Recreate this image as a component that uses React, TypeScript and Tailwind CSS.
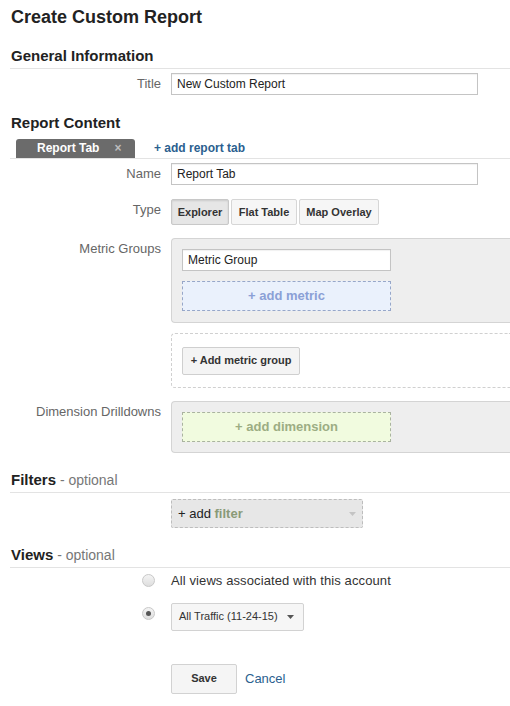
function Label({ children, className = "" }: { children: React.ReactNode; className?: string }) {
  return <div className={`text-right text-[13px] text-[#666] ${className}`}>{children}</div>;
}

function Heading({ children, className = "" }: { children: React.ReactNode; className?: string }) {
  return (
    <div className={`ml-[10px] border-b border-[#e3e3e3] pb-[3px] pl-[1px] text-[15px] leading-[18px] ${className}`}>
      {children}
    </div>
  );
}

function TextInput({ value, className = "" }: { value: string; className?: string }) {
  return (
    <div
      className={`flex h-[22px] items-center border border-[#c4c4c4] bg-white px-[5px] text-[12px] text-[#222] shadow-[inset_0_1px_1px_rgba(0,0,0,0.06)] ${className}`}
    >
      {value}
    </div>
  );
}

function Radio({ checked }: { checked?: boolean }) {
  return (
    <span className="flex h-[13px] w-[13px] items-center justify-center rounded-full border border-[#c8c8c8] bg-gradient-to-b from-[#f4f4f4] to-[#dedede]">
      {checked && <span className="h-[5px] w-[5px] rounded-full bg-[#555]" />}
    </span>
  );
}

function Caret({ color }: { color: string }) {
  return (
    <svg width="7" height="4" viewBox="0 0 7 4" className="shrink-0">
      <path d="M0 0h7L3.5 4z" fill={color} />
    </svg>
  );
}

export default function App() {
  return (
    <div className="w-[510px] overflow-hidden bg-white pb-[14px] font-['Liberation_Sans',Arial,sans-serif] text-[#222]">
      <h1 className="pl-[11px] pt-[6px] text-[18px] font-bold leading-[22px] text-[#222]">
        Create Custom Report
      </h1>

      <Heading className="mt-[19px]">
        <span className="font-bold">General Information</span>
      </Heading>

      <div className="mt-[4px] grid grid-cols-[161px_1fr] items-center gap-x-[10px]">
        <Label>Title</Label>
        <TextInput value="New Custom Report" className="w-[307px]" />
      </div>

      <div className="mt-[19px] pl-[11px] text-[15px] font-bold leading-[18px]">Report Content</div>

      <div className="ml-[10px] mt-[7px] flex items-end border-b border-[#e3e3e3] leading-[15px]">
        <div className="ml-[6px] flex h-[19px] w-[119px] items-center rounded-t-[3px] bg-[#6b6b6b] pl-[21px] text-[12px] font-bold text-white">
          Report Tab
          <span className="ml-[15px] text-[12px] font-bold text-[#bdbdbd]">×</span>
        </div>
        <span className="mb-[2px] ml-[19px] text-[12px] font-bold text-[#2b5f8f]">+ add report tab</span>
      </div>

      <div className="mt-[4px] grid grid-cols-[161px_1fr] items-center gap-x-[10px]">
        <Label>Name</Label>
        <TextInput value="Report Tab" className="w-[307px]" />
      </div>

      <div className="mt-[14px] grid grid-cols-[161px_1fr] items-start gap-x-[10px]">
        <Label className="pt-[1px]">Type</Label>
        <div className="flex gap-[2px] text-[11px] font-bold text-[#333]">
          <span className="flex h-[26px] w-[58px] items-center justify-center rounded-[2px] border border-[#c8c8c8] bg-[#e6e6e6] shadow-[inset_0_1px_2px_rgba(0,0,0,0.12)]">
            Explorer
          </span>
          <span className="flex h-[26px] w-[66px] items-center justify-center rounded-[2px] border border-[#d6d6d6] bg-[#f6f6f6]">
            Flat Table
          </span>
          <span className="flex h-[26px] w-[80px] items-center justify-center rounded-[2px] border border-[#d6d6d6] bg-[#f6f6f6]">
            Map Overlay
          </span>
        </div>
      </div>

      <div className="mt-[13px] grid grid-cols-[161px_1fr] items-start gap-x-[10px]">
        <Label className="pt-[1px]">Metric Groups</Label>
        <div className="h-[85px] rounded-l-[4px] border border-r-0 border-[#d4d4d4] bg-[#eeeeee] pl-[10px] pt-[10px]">
          <TextInput value="Metric Group" className="w-[209px]" />
          <div className="mt-[10px] flex h-[30px] w-[209px] items-center justify-center border border-dashed border-[#97a7c9] bg-[#eaf1fc] text-[13px] font-bold text-[#8ba0d6]">
            + add metric
          </div>
        </div>
      </div>

      <div className="mt-[10px] grid grid-cols-[161px_1fr] gap-x-[10px]">
        <div />
        <div className="flex h-[55px] items-center rounded-l-[4px] border border-r-0 border-dashed border-[#d0d0d0] pl-[10px]">
          <span className="flex h-[28px] w-[118px] items-center justify-center rounded-[2px] border border-[#cfcfcf] bg-[#f4f4f4] text-[11px] font-bold text-[#333]">
            + Add metric group
          </span>
        </div>
      </div>

      <div className="mt-[13px] grid grid-cols-[161px_1fr] items-start gap-x-[10px]">
        <Label className="pt-[1px]">Dimension Drilldowns</Label>
        <div className="h-[52px] rounded-l-[4px] border border-r-0 border-[#d4d4d4] bg-[#eeeeee] pl-[10px] pt-[10px]">
          <div className="flex h-[30px] w-[209px] items-center justify-center border border-dashed border-[#aab3a0] bg-[#f1fbdf] text-[13px] font-bold text-[#9cad83]">
            + add dimension
          </div>
        </div>
      </div>

      <Heading className="mt-[18px]">
        <span className="font-bold">Filters</span>
        <span className="text-[14px] text-[#777]"> - optional</span>
      </Heading>

      <div className="mt-[6px] grid grid-cols-[161px_1fr] gap-x-[10px]">
        <div />
        <div className="flex h-[29px] w-[192px] items-center justify-between rounded-[2px] border border-dashed border-[#bdbdbd] bg-[#e7e7e7] pl-[6px] pr-[6px] text-[13px]">
          <span>
            <span className="text-[#222]">+ add </span>
            <span className="font-bold text-[#8a9a78]">filter</span>
          </span>
          <Caret color="#c4c4c4" />
        </div>
      </div>

      <Heading className="mt-[18px]">
        <span className="font-bold">Views</span>
        <span className="text-[14px] text-[#777]"> - optional</span>
      </Heading>

      <div className="mt-[3px] grid grid-cols-[155px_1fr] items-center gap-x-[16px]">
        <div className="flex justify-end">
          <Radio />
        </div>
        <span className="text-[13px] tracking-[0.1px] text-[#333]">All views associated with this account</span>
      </div>

      <div className="mt-[12px] grid grid-cols-[155px_1fr] items-start gap-x-[16px]">
        <div className="flex justify-end pt-[4px]">
          <Radio checked />
        </div>
        <div className="flex h-[28px] w-[133px] items-center rounded-[2px] border border-[#d2d2d2] bg-[#f6f6f6] pl-[7px] text-[11px] text-[#333]">
          All Traffic (11-24-15)
          <span className="ml-[9px]">
            <Caret color="#555" />
          </span>
        </div>
      </div>

      <div className="mt-[33px] grid grid-cols-[161px_1fr] gap-x-[10px]">
        <div />
        <div className="flex items-center">
          <span className="flex h-[30px] w-[66px] items-center justify-center rounded-[2px] border border-[#d2d2d2] bg-[#f5f5f5] text-[11px] font-bold text-[#333]">
            Save
          </span>
          <span className="ml-[8px] text-[13px] text-[#2b5f8f]">Cancel</span>
        </div>
      </div>
    </div>
  );
}
